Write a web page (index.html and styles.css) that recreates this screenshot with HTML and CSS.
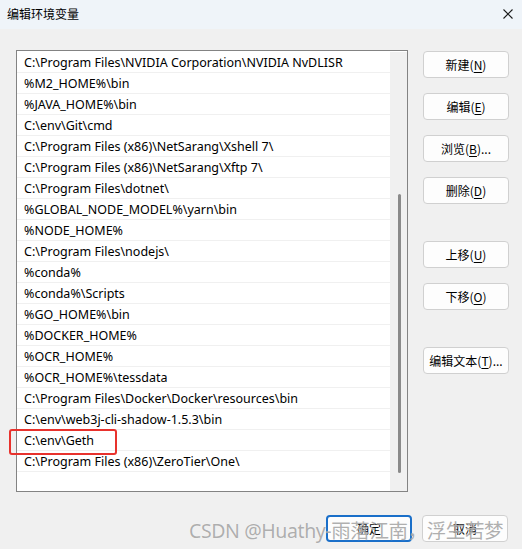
FILE: index.html
```html
<!DOCTYPE html>
<html lang="zh">
<head>
<meta charset="utf-8">
<title>编辑环境变量</title>
<link rel="stylesheet" href="styles.css">
</head>
<body>
<div class="window">
  <div class="titlebar">
    <span class="title">编辑环境变量</span>
    <svg class="close" width="10" height="10" viewBox="0 0 10 10"><path d="M0.5 0.5L9.5 9.5M9.5 0.5L0.5 9.5" stroke="#1a1a1a" stroke-width="1.1" fill="none"/></svg>
  </div>
  <div class="content">
    <div class="listbox">
      <div class="rows">
        <div class="row">C:\Program Files\NVIDIA Corporation\NVIDIA NvDLISR</div>
        <div class="row">%M2_HOME%\bin</div>
        <div class="row">%JAVA_HOME%\bin</div>
        <div class="row">C:\env\Git\cmd</div>
        <div class="row">C:\Program Files (x86)\NetSarang\Xshell 7\</div>
        <div class="row">C:\Program Files (x86)\NetSarang\Xftp 7\</div>
        <div class="row">C:\Program Files\dotnet\</div>
        <div class="row">%GLOBAL_NODE_MODEL%\yarn\bin</div>
        <div class="row">%NODE_HOME%</div>
        <div class="row">C:\Program Files\nodejs\</div>
        <div class="row">%conda%</div>
        <div class="row">%conda%\Scripts</div>
        <div class="row">%GO_HOME%\bin</div>
        <div class="row">%DOCKER_HOME%</div>
        <div class="row">%OCR_HOME%</div>
        <div class="row">%OCR_HOME%\tessdata</div>
        <div class="row">C:\Program Files\Docker\Docker\resources\bin</div>
        <div class="row">C:\env\web3j-cli-shadow-1.5.3\bin</div>
        <div class="row highlighted">C:\env\Geth<span class="mark"></span></div>
        <div class="row">C:\Program Files (x86)\ZeroTier\One\</div>
      </div>
      <div class="scrollbar"><div class="thumb"></div></div>
    </div>
    <div class="side">
      <div class="group">
        <button class="btn">新建(<u>N</u>)</button>
        <button class="btn">编辑(<u>E</u>)</button>
        <button class="btn">浏览(<u>B</u>)...</button>
        <button class="btn">删除(<u>D</u>)</button>
      </div>
      <div class="group move">
        <button class="btn">上移(<u>U</u>)</button>
        <button class="btn">下移(<u>O</u>)</button>
      </div>
      <div class="group text">
        <button class="btn">编辑文本(<u>T</u>)...</button>
      </div>
    </div>
  </div>
  <div class="footer">
    <button class="btn default">确定</button>
    <button class="btn">取消</button>
  </div>
  <div class="watermark">CSDN @Huathy-雨落江南，浮生若梦</div>
</div>
</body>
</html>
```
FILE: styles.css
```css
* { box-sizing: border-box; }
html, body { margin: 0; padding: 0; }
body {
  width: 522px;
  height: 549px;
  background: #f0f0f0;
  font-family: "Noto Sans", "Noto Sans CJK SC", sans-serif;
  font-size: 12px;
  color: #000;
  overflow: hidden;
}
.window {
  position: relative;
  width: 522px;
  height: 549px;
}
.titlebar {
  height: 29px;
  background: #eff4f9;
  display: flex;
  align-items: center;
  justify-content: space-between;
  padding: 0 9px 3px 7px;
}
.title {
  font-family: "Noto Sans CJK SC", sans-serif;
  font-size: 12px;
  color: #000;
}
.close { display: block; margin-top: 2px; }
.content {
  display: flex;
  padding: 21px 0 0 16px;
}
.listbox {
  width: 392px;
  height: 442px;
  border: 1px solid #838383;
  background: #fff;
  display: flex;
}
.rows {
  flex: 1;
  padding-top: 1px;
}
.row {
  position: relative;
  height: 21px;
  line-height: 21px;
  padding-left: 7px;
  border-bottom: 1px solid #f0f0f0;
  white-space: nowrap;
  font-family: "Noto Sans", sans-serif;
  font-size: 12.5px;
  letter-spacing: 0;
}
.mark {
  position: absolute;
  left: -8px;
  top: -1px;
  width: 108px;
  height: 26px;
  border: 2px solid #e8322d;
  border-radius: 3px;
}
.scrollbar {
  width: 17px;
  background: #f0f0f0;
  margin-top: 1px;
  padding-top: 142px;
  display: flex;
  justify-content: center;
}
.thumb {
  width: 3px;
  height: 279px;
  background: #8a8a8a;
  border-radius: 2px;
  margin-left: 1px;
}
.side {
  margin-left: 15px;
  padding-top: 1px;
  width: 86px;
  display: flex;
  flex-direction: column;
}
.group {
  display: flex;
  flex-direction: column;
  gap: 15px;
}
.move { margin-top: 37px; }
.text { margin-top: 37px; }
.btn {
  width: 86px;
  height: 27px;
  padding: 0;
  background: #fdfdfd;
  border: 1px solid #d0d0d0;
  border-radius: 4px;
  font-family: "Noto Sans CJK SC", sans-serif;
  font-size: 12px;
  color: #000;
  line-height: 25px;
}
.btn u { text-decoration-thickness: 1px; text-underline-offset: 2px; }
.footer {
  display: flex;
  justify-content: flex-end;
  gap: 10px;
  padding: 23px 14px 0 0;
}
.btn.default {
  border: 2px solid #1a6fc9;
  line-height: 23px;
}
.watermark {
  position: absolute;
  left: 189px;
  top: 515px;
  font-family: "Noto Sans", "Noto Sans CJK SC", sans-serif;
  font-size: 19.5px;
  color: rgba(140, 140, 140, 0.7);
  text-shadow: 0 0 1px rgba(255,255,255,0.8);
  white-space: nowrap;
  letter-spacing: -0.4px;
}
```
